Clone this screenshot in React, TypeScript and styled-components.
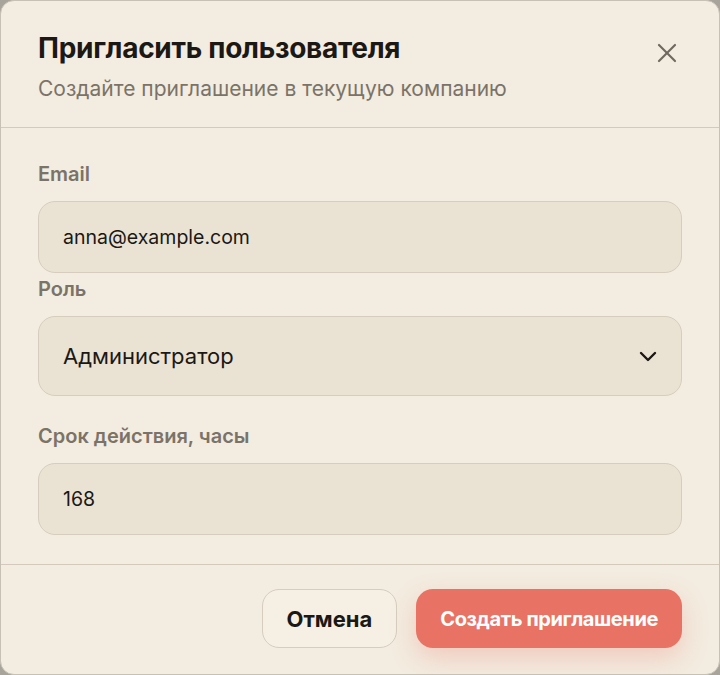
import React, { FC, memo, useState } from 'react';
import styled, { createGlobalStyle } from 'styled-components';

const GlobalStyle = createGlobalStyle`
  html, body {
    margin: 0;
    padding: 0;
    background: #a8a49c;
  }
  body {
    font-family: Inter, "Noto Sans", sans-serif;
    -webkit-font-smoothing: antialiased;
  }
  * { box-sizing: border-box; }
`;

const Dialog = styled.div`
  width: 720px;
  height: 675px;
  background: #f3ece0;
  border: 1px solid #c6c0b5;
  border-radius: 14px;
  display: flex;
  flex-direction: column;
  overflow: hidden;
`;

const Header = styled.div`
  display: flex;
  align-items: flex-start;
  justify-content: space-between;
  padding: 29px 41px 25px 37px;
  border-bottom: 1px solid #d3cabb;
`;

const HeaderText = styled.div`
  display: flex;
  flex-direction: column;
  gap: 10px;
`;

const Title = styled.h2`
  margin: 0;
  font-size: 28px;
  line-height: 36px;
  font-weight: 700;
  letter-spacing: -0.01em;
  color: #1b1815;
`;

const Subtitle = styled.p`
  margin: 0;
  font-size: 21px;
  line-height: 26px;
  color: #7b7368;
`;

const CloseButton = styled.button`
  border: none;
  background: none;
  padding: 0;
  margin-top: 12px;
  width: 22px;
  height: 22px;
  display: flex;
  align-items: center;
  justify-content: center;
  color: #6f685f;
  cursor: pointer;
`;

const Body = styled.div`
  flex: 1;
  padding: 33px 37px 0 37px;
  display: flex;
  flex-direction: column;
`;

const Field = styled.label<{ $gap?: number }>`
  display: flex;
  flex-direction: column;
  margin-top: ${(p) => p.$gap ?? 0}px;
`;

const Label = styled.span`
  font-size: 20px;
  line-height: 26px;
  font-weight: 600;
  color: #7b7368;
  margin-bottom: 14px;
`;

const Input = styled.input`
  width: 100%;
  height: 72px;
  padding: 0 24px;
  border: 1.5px solid #d6cdbe;
  border-radius: 17px;
  background: #eae3d4;
  font-family: inherit;
  font-size: 19.5px;
  color: #1b1815;
  outline: none;
`;

const SelectBox = styled.div`
  display: flex;
  align-items: center;
  justify-content: space-between;
  height: 80px;
  padding: 0 24px;
  border: 1.5px solid #d6cdbe;
  border-radius: 17px;
  background: #eae3d4;
  font-size: 22px;
  color: #1b1815;
`;

const Footer = styled.div`
  display: flex;
  justify-content: flex-end;
  gap: 19px;
  padding: 24px 37px 26px;
  border-top: 1px solid #d3cabb;
`;

const Button = styled.button<{ $primary?: boolean }>`
  height: 59px;
  padding: 0 24px;
  border-radius: 17px;
  font-family: inherit;
  font-size: ${(p) => (p.$primary ? '20px' : '22px')};
  font-weight: 700;
  letter-spacing: ${(p) => (p.$primary ? '-0.02em' : '0')};
  cursor: pointer;
  border: ${(p) => (p.$primary ? 'none' : '1.5px solid #d6cdbe')};
  background: ${(p) => (p.$primary ? '#e87364' : '#f5efe4')};
  color: ${(p) => (p.$primary ? '#fff' : '#1b1815')};
  box-shadow: ${(p) => (p.$primary ? '0 10px 26px rgba(232, 115, 100, 0.28)' : 'none')};
`;

const CloseIcon: FC = () => (
  <svg width="20" height="20" viewBox="0 0 20 20" fill="none" stroke="currentColor" strokeWidth="2.2" strokeLinecap="round">
    <path d="M2 2 18 18" />
    <path d="M18 2 2 18" />
  </svg>
);

const ChevronIcon: FC = () => (
  <svg width="18" height="11" viewBox="0 0 18 11" fill="none" stroke="currentColor" strokeWidth="2.4" strokeLinecap="round" strokeLinejoin="round">
    <path d="M2 2 9 9 16 2" />
  </svg>
);

const InviteDialog: FC = memo(function InviteDialog() {
  const [email, setEmail] = useState('anna@example.com');
  const [hours, setHours] = useState('168');

  return (
    <Dialog>
      <Header>
        <HeaderText>
          <Title>Пригласить пользователя</Title>
          <Subtitle>Создайте приглашение в текущую компанию</Subtitle>
        </HeaderText>
        <CloseButton aria-label="Закрыть">
          <CloseIcon />
        </CloseButton>
      </Header>
      <Body>
        <Field>
          <Label>Email</Label>
          <Input value={email} onChange={(e) => setEmail(e.target.value)} />
        </Field>
        <Field $gap={3}>
          <Label>Роль</Label>
          <SelectBox>
            Администратор
            <ChevronIcon />
          </SelectBox>
        </Field>
        <Field $gap={27}>
          <Label>Срок действия, часы</Label>
          <Input value={hours} onChange={(e) => setHours(e.target.value)} />
        </Field>
      </Body>
      <Footer>
        <Button>Отмена</Button>
        <Button $primary>Создать приглашение</Button>
      </Footer>
    </Dialog>
  );
});

export default function App() {
  return (
    <>
      <GlobalStyle />
      <InviteDialog />
    </>
  );
}
